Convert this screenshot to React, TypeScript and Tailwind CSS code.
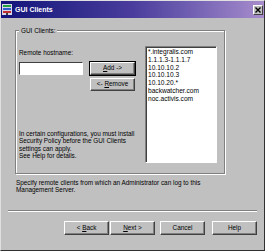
import React from "react";

const raised =
  "bg-[#c0c0c0] border border-t-white border-l-white border-r-[#404040] border-b-[#404040] shadow-[inset_-1px_-1px_0_#808080]";

function Btn({
  children,
  className = "",
  def = false,
}: {
  children: React.ReactNode;
  className?: string;
  def?: boolean;
}) {
  return (
    <div
      className={`flex items-center justify-center h-[13px] w-[45px] ${raised} ${
        def ? "outline outline-1 outline-black" : ""
      } ${className}`}
    >
      <span className="leading-none">{children}</span>
    </div>
  );
}

function TitleIcon() {
  return (
    <svg width="10" height="11" viewBox="0 0 10 11">
      <rect x="0" y="0" width="10" height="11" fill="#d8d8e8" />
      <rect x="1" y="1" width="8" height="2" fill="#20a040" />
      <rect x="1" y="4" width="8" height="2" fill="#3060d0" />
      <rect x="1" y="7" width="8" height="2" fill="#c03030" />
      <rect x="4" y="9" width="2" height="2" fill="#404040" />
    </svg>
  );
}

const hosts = [
  "*.integralis.com",
  "1.1.1.3-1.1.1.7",
  "10.10.10.2",
  "10.10.10.3",
  "10.10.20.*",
  "backwatcher.com",
  "noc.activis.com",
];

export default function App() {
  return (
    <div
      className="w-[265px] h-[251px] bg-[#c0c0c0] text-black text-[6.4px] border border-t-[#e0e0e0] border-l-[#e0e0e0] border-r-[#303030] border-b-[#303030] flex flex-col overflow-hidden"
      style={{ fontFamily: '"Liberation Sans", Arial, sans-serif' }}
    >
      {/* Title bar */}
      <div className="h-[17px] flex items-center bg-gradient-to-r from-[#12127a] via-[#4a3c9c] to-[#a88ccc] pl-[1px] pr-[1px]">
        <TitleIcon />
        <span className="ml-[3px] text-white font-bold text-[7px] leading-none">
          GUI Clients
        </span>
        <div className="ml-auto flex items-center justify-center w-[10px] h-[10px] bg-[#c0c0c0] border border-t-white border-l-white border-r-[#404040] border-b-[#404040]">
          <svg width="6" height="6" viewBox="0 0 6 6">
            <path d="M0.5 0.5 L5.5 5.5 M5.5 0.5 L0.5 5.5" stroke="black" strokeWidth="1.4" />
          </svg>
        </div>
      </div>

      {/* Group box */}
      <div className="relative mt-[12px] ml-[14px] w-[210px] h-[144px] border border-[#808080] shadow-[inset_1px_1px_0_white,1px_1px_0_white] flex pt-[15px] pl-[3px]">
        <span className="absolute -top-[4px] left-[3px] px-[2px] bg-[#c0c0c0] leading-[7px]">
          GUI Clients:
        </span>

        <div className="w-[126px] flex flex-col">
          <div className="mt-[3px] leading-[7px]">Remote hostname:</div>
          <div className="mt-[6px] flex">
            <div className="w-[64px] h-[13px] bg-white border border-t-[#404040] border-l-[#404040] border-r-white border-b-white" />
            <Btn def className="ml-[7px]">
              <span className="underline">A</span>dd -&gt;
            </Btn>
          </div>
          <Btn className="mt-[3px] ml-[71px]">
            &lt;- <span className="underline">R</span>emove
          </Btn>
          <div className="mt-[39px] leading-[7.4px]">
            In certain configurations, you must install
            <br />
            Security Policy before the GUI Clients
            <br />
            settings can apply.
            <br />
            See Help for details.
          </div>
        </div>

        <div className="w-[72px] h-[117px] bg-white border border-t-[#808080] border-l-[#808080] border-r-white border-b-white shadow-[inset_1px_1px_0_#404040] pl-[2px] pt-[1px] text-[6.6px] leading-[7.8px]">
          {hosts.map((h) => (
            <div key={h} className="whitespace-nowrap">
              {h}
            </div>
          ))}
        </div>
      </div>

      <div className="mt-[5px] ml-[15px] leading-[7.2px]">
        Specify remote clients from which an Administrator can log to this
        <br />
        Management Server.
      </div>

      {/* Separator */}
      <div className="mt-[17px] ml-[7px] w-[249px] h-[2px] border-t border-t-[#808080] border-b border-b-white" />

      {/* Buttons */}
      <div className="mt-[9px] flex pl-[63px]">
        <Btn className="h-[14px]">
          &lt; <span className="underline">B</span>ack
        </Btn>
        <Btn className="h-[14px] ml-[1px]">
          <span className="underline">N</span>ext &gt;
        </Btn>
        <Btn className="h-[14px] ml-[5px]">Cancel</Btn>
        <Btn className="h-[14px] ml-[7px]">Help</Btn>
      </div>
    </div>
  );
}
